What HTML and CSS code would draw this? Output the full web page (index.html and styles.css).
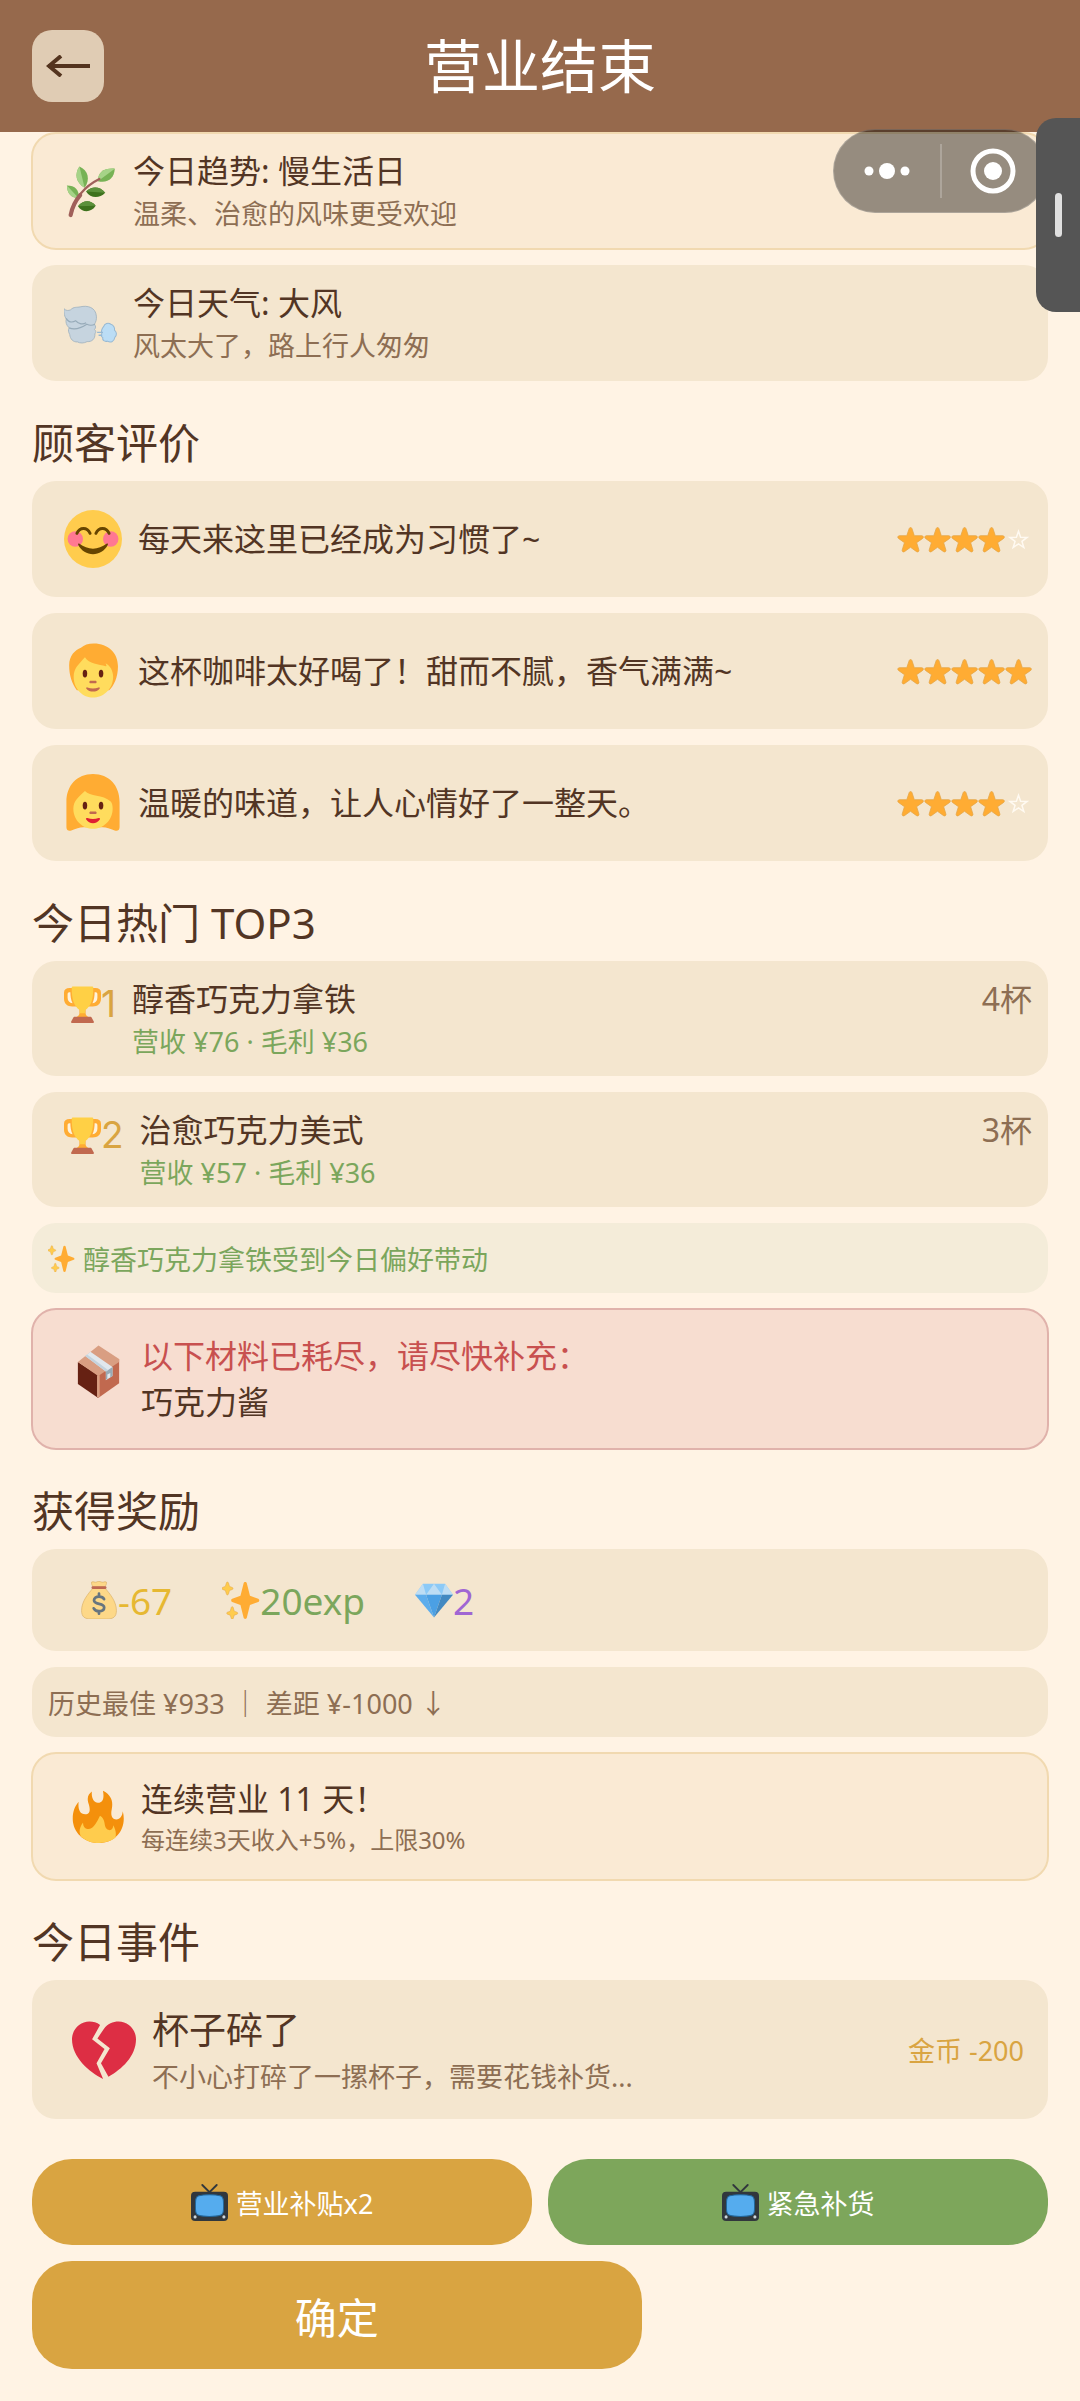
FILE: index.html
```html
<!DOCTYPE html>
<html lang="zh-CN">
<head>
  <meta charset="UTF-8">
  <meta name="viewport" content="width=device-width, initial-scale=1">
  <title>营业结束</title>
  <link rel="stylesheet" href="styles.css">
</head>
<body>

<!-- Shared icons -->
<svg class="sprite" aria-hidden="true">
  <symbol id="star" viewBox="0 0 36 36">
    <path fill="#ffac33" stroke="#e3a548" stroke-width="1" d="M27.3 34.6c-.4 0-.8-.1-1.2-.4L18 28.4l-8.1 5.8c-.7.5-1.6.5-2.3 0-.7-.5-1-1.4-.7-2.2l3-9.8-8-5.7c-.7-.5-1-1.4-.7-2.2.3-.8 1-1.4 1.9-1.4l9.9 0 3.2-9.4c.3-.8 1-1.4 1.9-1.4s1.6.6 1.9 1.4l3.1 9.4 10 0c.9 0 1.6.6 1.9 1.4.3.8 0 1.7-.7 2.2l-8.1 5.7 3 9.8c.3.8 0 1.7-.7 2.2-.3.3-.7.4-1.2.4z"/>
  </symbol>
  <symbol id="star-empty" viewBox="0 0 36 36">
    <path fill="none" stroke="#fffaf2" stroke-width="2" d="M18 7l2.800 8 8.700.2-6.900 5.300 2.500 8.200-7.100-4.900-7.100 4.900 2.500-8.200-6.900-5.300 8.700-.2z"/>
  </symbol>
  <symbol id="sparkles" viewBox="0 0 36 36">
    <path fill="#ffac33" d="M34.3 16.9l-7.8-3-3-11.800c-.2-.7-.8-1.100-1.500-1.100s-1.300.4-1.500 1.100l-3 11.800-7.800 3c-.6.2-1 .8-1 1.500s.4 1.200 1 1.400l7.800 3 3 12.100c.2.6.8 1.100 1.500 1.100s1.300-.5 1.500-1.100l3-12.100 7.800-3c.6-.2 1-.8 1-1.400s-.4-1.300-1-1.500z"/>
    <path fill="#ffcc4d" stroke="#e3a548" stroke-width=".5" d="M14.300 29.600l-2.700-1-1-3.500c-.1-.5-.5-.8-.9-.8s-.8.300-.9.700l-1 3.600-2.700 1c-.4.100-.6.500-.6.900s.2.800.6.900l2.700 1 1 3c.1.500.5.800.9.800s.8-.3.900-.7l1-3.100 2.700-1c.4-.1.600-.5.600-.9s-.2-.7-.6-.9zM9.800 6.200L7.100 5.100 6.100 1.700C5.900 1.200 5.500 1 5.100 1s-.8.200-.9.700l-1 3.400-2.700 1c-.3.200-.5.600-.5 1s.2.700.6.900l2.600 1 1 3.400c.1.500.5.800.9.800s.8-.3 1-.7l1-3.500 2.700-1c.4-.1.600-.5.600-.9s-.2-.8-.6-.9z"/>
  </symbol>
  <symbol id="trophy" viewBox="0 0 36 36">
    <path fill="#ffac33" d="M5.500 2C2 2 0 3.500 0 6.500v6C0 17.500 3.500 20 8 20h5.500V2zM30.500 2C34 2 36 3.500 36 6.500v6c0 5-3.500 7.500-8 7.500h-5.500V2z"/>
    <path fill="#fff3dc" d="M5.200 6c-1.200 0-1.700.7-1.700 2v3.500c0 3.200 2 5 4.800 5.200C6.800 14 6.200 9.500 6.200 6zM30.800 6c1.200 0 1.700.7 1.700 2v3.500c0 3.200-2 5-4.800 5.200 1.500-2.700 2.100-7.200 2.100-10.700z"/>
    <path fill="#ffac33" d="M15 21h6v5.500c0 2 1.500 3 4 4.500H11c2.500-1.500 4-2.500 4-4.500z"/>
    <path fill="#ffd045" d="M7.500 1.500c0-.8.6-1 1.200-1h18.600c.6 0 1.200.2 1.200 1C28.500 14 26 20 20.500 23.500v3h-5v-3C10 20 7.500 14 7.500 1.500z"/>
    <path fill="#c1694f" d="M10.500 30h15c.8 0 1.200.3 1.500 1l2 3.500c.3.7 0 1.500-1 1.500H8c-1 0-1.300-.8-1-1.500L9 31c.3-.7.7-1 1.500-1z"/>
  </symbol>
  <symbol id="tv" viewBox="0 0 36 36">
    <path fill="none" stroke="#31373d" stroke-width="1.800" stroke-linecap="round" d="M11 1l7 7 7-7"/>
    <rect x="0" y="7.500" width="36" height="28.500" rx="4" fill="#31373d"/>
    <path fill="#55acee" stroke="#226699" stroke-width="1" d="M7.500 11.500C12 10 24 10 28.500 11.500c3 1 3.200 3.500 3.200 9.500s-.2 8.500-3.200 9.500c-4.500 1.500-16.500 1.500-21 0-3-1-3.200-3.500-3.200-9.500s.2-8.500 3.200-9.500z"/>
    <circle cx="4" cy="32" r="1.500" fill="#ccd6dd"/>
    <circle cx="32" cy="32" r="1.500" fill="#ccd6dd"/>
  </symbol>
</svg>

<header class="topbar">
  <button class="back" aria-label="返回">
    <svg viewBox="0 0 44 22" aria-hidden="true"><path d="M2 11H44M15 1L3 11L15 21"/></svg>
  </button>
  <h1>营业结束</h1>
</header>

<div class="capsule">
  <button class="capsule-btn" aria-label="更多">
    <svg viewBox="0 0 46 18" width="46" height="18" aria-hidden="true"><circle cx="5" cy="9" r="4.500"/><circle cx="23" cy="9" r="8"/><circle cx="41" cy="9" r="4.500"/></svg>
  </button>
  <button class="capsule-btn" aria-label="关闭">
    <svg viewBox="0 0 46 46" width="46" height="46" aria-hidden="true"><circle class="ring" cx="23" cy="23" r="20"/><circle cx="23" cy="23" r="9"/></svg>
  </button>
</div>
<div class="side-tab"></div>

<main class="page">
  <div class="card highlight">
    <svg class="icon" viewBox="0 0 36 36" aria-hidden="true">
      <path fill="#77b255" d="M23 11C23 5 27 2 34.500 2.500 34 9 30 12.500 23 11z"/>
      <path fill="#a6d388" d="M23 11C23 5 27 2 34.500 2.500z"/>
      <path fill="#77b255" d="M14 15.500C8 12 7 6 10.500 1c6 2.500 7.500 9 3.500 14.500z"/>
      <path fill="#a6d388" d="M14 15.500C8 12 7 6 10.500 1z"/>
      <path fill="#77b255" d="M10 22.500C5 22.500 2 19.500 2 14c5.500 0 8.500 3 8 8.500z"/>
      <path fill="#a6d388" d="M10 22.500C5 22.500 2 19.500 2 14z"/>
      <path fill="#3e721d" d="M15 18c4-4 9.500-3.500 13 .8-4 4.200-10 4-13-.8z"/>
      <path fill="#5c913b" d="M15 18c4-4 9.500-3.500 13 .8z"/>
      <path fill="#3e721d" d="M9.500 28c3.500-4.500 9-4.500 12-.3-3 4.800-9 5-12 .3z"/>
      <path fill="#5c913b" d="M9.500 28c3.500-4.500 9-4.500 12-.3z"/>
      <path fill="none" stroke="#a0605a" stroke-width="1.600" stroke-linecap="round" d="M5 33C7 24 13 15 24 9.500"/>
      <path fill="none" stroke="#a0605a" stroke-width="2.800" stroke-linecap="round" d="M4.500 34C5.500 29 8 24 11 20.500"/>
    </svg>
    <div class="texts">
      <h3>今日趋势: 慢生活日</h3>
      <p>温柔、治愈的风味更受欢迎</p>
    </div>
  </div>

  <div class="card">
    <svg class="icon" viewBox="0 0 36 36" aria-hidden="true">
      <path fill="#c6d4df" stroke="#a3b4c0" stroke-width=".6" d="M0 8c1.500 1.500 3 1.300 4.500.7C6.500 6.500 9 7.200 11 6.700c5-1.200 10.500.3 11 6.300.2 2-.3 4-1.300 5.500 1 1.500 1 2.500 0 3.500 1 1 1.200 2 .3 3 .2 3.500-2 5.500-5.300 5.300-2 1.200-5 1.200-6.500.2-3 .3-5-2-5.300-5-.7-1.500-1.400-3-.4-4.500C1.500 19 1 17 1.500 15 .3 13-.3 10.500 0 8z"/>
      <path fill="none" stroke="#97abb9" stroke-width=".8" d="M1.500 14.500c1.500 2.500 4 3 6.500 1.700 2 2.300 5 2.600 7 1.300M3.500 21c4 1.500 9-.5 12-2.500 2 1 4 .8 5.500 0"/>
      <path fill="#bbddf5" stroke="#97b9d3" stroke-width=".7" d="M27 20c.5-2 3-3 4.800-1.500 2 .5 2.800 2.500 2.500 4 1.700 1.500 1.700 3.500.2 5-.5 3-3 3.800-5 2.500-2 .5-3.500-.5-3.200-2.500-1-.5-1.300-1.500-.6-2.500-.7-2 0-3.500 1.300-5z"/>
      <path fill="none" stroke="#97b9d3" stroke-width=".9" d="M22.500 24h4M23.500 26h2.500"/>
    </svg>
    <div class="texts">
      <h3>今日天气: 大风</h3>
      <p>风太大了，路上行人匆匆</p>
    </div>
  </div>

  <h2>顾客评价</h2>

  <div class="card review">
    <svg class="icon" viewBox="0 0 36 36" aria-hidden="true">
      <circle cx="18" cy="18" r="18" fill="#ffcc4d"/>
      <circle cx="7" cy="18" r="4.800" fill="#ff7892"/>
      <circle cx="29" cy="18" r="4.800" fill="#ff7892"/>
      <path fill="none" stroke="#664500" stroke-width="1.800" stroke-linecap="round" d="M8 14.500c1.800-4 6.400-4 8.200 0M19.800 14.500c1.800-4 6.400-4 8.200 0"/>
      <path fill="#664500" d="M8.800 21.600c-.3-.6.4-1 .8-.6 5 4 11.800 4 16.800 0 .5-.4 1.100 0 .8.6-3.700 7.800-14.700 7.800-18.400 0z"/>
    </svg>
    <p>每天来这里已经成为习惯了~</p>
    <div class="stars" role="img" aria-label="4星">
      <svg><use href="#star"/></svg><svg><use href="#star"/></svg><svg><use href="#star"/></svg><svg><use href="#star"/></svg><svg><use href="#star-empty"/></svg>
    </div>
  </div>

  <div class="card review">
    <svg class="icon" viewBox="0 0 36 36" aria-hidden="true">
      <path fill="#ffac33" d="M18.500 1c9 0 15 6 15 14 0 7-2.500 12-5.500 15H8C5 26 3.200 21 3.200 14.500 3.200 8 7 5 10.500 3.500 12.500 2 15 1 18.500 1z"/>
      <path fill="#ffdc5d" d="M13 9.500c2.500 4 8.500 4.500 13 5.500.7.2.2-1-.2-1.800 2.800 1.300 4.700 4.800 4.700 8.300 0 8-6.500 13-12.500 13S6 29.500 6 21.500c0-5 3-7.500 7-12z"/>
      <g fill="#662113"><ellipse cx="13" cy="19.600" rx="1.400" ry="2.400"/><ellipse cx="23" cy="19.600" rx="1.400" ry="2.400"/></g>
      <path fill="#c1694f" d="M16.500 24h3c1 0 1 1.600 0 1.600h-3c-1 0-1-1.600 0-1.600zM14.500 28.200c2.300.8 4.700.8 7 0 .6-.2.9.4.6.8-1.800 2.400-6.400 2.400-8.200 0-.3-.4 0-1 .6-.8z"/>
    </svg>
    <p>这杯咖啡太好喝了！甜而不腻，香气满满~</p>
    <div class="stars" role="img" aria-label="5星">
      <svg><use href="#star"/></svg><svg><use href="#star"/></svg><svg><use href="#star"/></svg><svg><use href="#star"/></svg><svg><use href="#star"/></svg>
    </div>
  </div>

  <div class="card review">
    <svg class="icon" viewBox="0 0 36 36" aria-hidden="true">
      <path fill="#ffac33" d="M18 0c10 0 16.500 7 16.500 17.500V33c0 2-1.500 2.500-3 2-3-1-5-2-7.500-2H12c-2.500 0-4.500 1-7.500 2-1.500.5-3 0-3-2V17.500C1.500 7 8 0 18 0z"/>
      <path fill="#ffdc5d" d="M13 10.500c3 3.500 11 2 16 6.500 1 1 1.200 3 1.200 4.500 0 7.500-6.200 12.500-12.200 12.500S5.800 29 5.800 21.500c0-5 3.500-7.500 7.200-11z"/>
      <g fill="#662113"><ellipse cx="13" cy="19.600" rx="1.400" ry="2.400"/><ellipse cx="23" cy="19.600" rx="1.400" ry="2.400"/></g>
      <path fill="#c1694f" d="M16.500 23.200h3c1 0 1 1.600 0 1.600h-3c-1 0-1-1.600 0-1.600z"/>
      <path fill="#df1f32" d="M14.500 27.300c2.300.8 4.700.8 7 0 .8-.2 1.100.4.7 1-1.800 3-6.600 3-8.400 0-.4-.6-.1-1.200.7-1z"/>
    </svg>
    <p>温暖的味道，让人心情好了一整天。</p>
    <div class="stars" role="img" aria-label="4星">
      <svg><use href="#star"/></svg><svg><use href="#star"/></svg><svg><use href="#star"/></svg><svg><use href="#star"/></svg><svg><use href="#star-empty"/></svg>
    </div>
  </div>

  <h2>今日热门 TOP3</h2>

  <div class="card top">
    <div class="rank"><svg><use href="#trophy"/></svg>1</div>
    <div class="texts">
      <h3>醇香巧克力拿铁</h3>
      <p>营收 ¥76 · 毛利 ¥36</p>
    </div>
    <span class="cups">4杯</span>
  </div>

  <div class="card top">
    <div class="rank"><svg><use href="#trophy"/></svg>2</div>
    <div class="texts">
      <h3>治愈巧克力美式</h3>
      <p>营收 ¥57 · 毛利 ¥36</p>
    </div>
    <span class="cups">3杯</span>
  </div>

  <div class="card strip boost"><svg><use href="#sparkles"/></svg>醇香巧克力拿铁受到今日偏好带动</div>

  <div class="card wide warning">
    <svg class="icon" viewBox="0 0 36 36" aria-hidden="true">
      <path fill="#662113" d="M4 11.500l13.800 9V36L4 26.500z"/>
      <path fill="#c1694f" d="M32 9.500l-14.200 11V36L32 26z"/>
      <path fill="#d99e82" d="M4 11.500L18 .3l14 9.200v2L17.800 21z"/>
      <path fill="#d99e82" d="M17 20.500h1.800V35l-1 .9-.8-.5z"/>
      <path fill="#e1e8ed" d="M9 7.500l3.500-3L27.500 15v6l-4.500 3v-6z"/>
      <path fill="#99aab5" d="M23 18l4.500-3v6L26 22v-3l-2 1v3l-1 .8z"/>
      <path fill="#c4d3dd" d="M9 7.500l1.300-1L24.500 17 23 18z"/>
    </svg>
    <div class="texts">
      <h3>以下材料已耗尽，请尽快补充：</h3>
      <p>巧克力酱</p>
    </div>
  </div>

  <h2>获得奖励</h2>

  <div class="card rewards">
    <div class="reward coin">
      <svg viewBox="0 0 36 36" aria-hidden="true">
        <path fill="#fdd888" stroke="#d9ae64" stroke-width=".6" d="M12 7h12c4 5 10.500 12 10.500 21 0 6-3 8-9 8h-15c-6 0-9-2-9-8C1.500 19 8 12 12 7zM11 1c2-1 3 .8 4.500 0s3-.8 5 0S23 0 25 1c.5 1.500-.5 3.500-1.500 4.500h-11C11.500 4.500 10.500 2.500 11 1z"/>
        <path fill="#bf6952" d="M12 5h12c1.500 0 1.500 2.500 0 2.500H12C10.500 7.500 10.500 5 12 5z"/>
        <path fill="none" stroke="#67757f" stroke-width="2.600" stroke-linecap="round" d="M22.800 17.200c-1-2-2.800-2.400-4.800-2.400-2.800 0-4.700 1.200-4.700 3.400 0 4.800 9.600 2.200 9.600 6.900 0 2.200-2 3.500-4.900 3.500-2.200 0-4-.7-5-2.700M18 12v2M18 29v2"/>
      </svg>-67
    </div>
    <div class="reward exp"><svg><use href="#sparkles"/></svg>20exp</div>
    <div class="reward gem">
      <svg viewBox="0 0 36 36" aria-hidden="true">
        <path fill="#8ccaf7" d="M7.500 2.500h21L36 13H0z"/>
        <path fill="#bdddf4" d="M7.500 2.500L10.500 13H0zM18 2.500L10.500 13h15zM28.500 2.500L25.500 13H36z"/>
        <path fill="#5dadec" d="M0 13h10.500L18 34.500z"/>
        <path fill="#4ba0e4" d="M10.500 13h15L18 34.500z"/>
        <path fill="#4289c1" d="M25.500 13H36L18 34.500z"/>
      </svg>2
    </div>
  </div>

  <div class="card strip">历史最佳 ¥933 ｜ 差距 ¥-1000 ↓</div>

  <div class="card wide highlight streak">
    <svg class="icon" viewBox="0 0 36 36" aria-hidden="true">
      <path fill="#f4900c" d="M18 36C8 36 .5 28.500.5 19.500c0-5 1.500-8.500 4-11.500-.5 4.500.5 8.500 4.500 8.500 4 0 3.300-4.500 2-8C10 4.500 11.500 2.500 13.500 1c-.5 4.500 1.500 7.500 4 7.700 3 .3 4.700-2.700 3.500-8.200C27 3.500 28 8 27 13c-1 4.500.5 7 3 7 2.800 0 4.200-2.500 4.500-5.500C37.500 26 30 36 18 36z"/>
      <path fill="#ffcc4d" d="M6 31.500C4.500 28.500 5 25.500 7.500 22c0 3 1.500 4.500 4 4.500 3.500-.5 5.500-5 7.500-9 4 2 2.500 7 4.500 8.800 2.300 2 4.500.7 4.500-2.300 2 3.500 2 6 1.500 8.500C23 37.500 12 37 6 31.500z"/>
    </svg>
    <div class="texts">
      <h3>连续营业 11 天！</h3>
      <p>每连续3天收入+5%，上限30%</p>
    </div>
  </div>

  <h2>今日事件</h2>

  <div class="card wide event">
    <svg class="icon" viewBox="0 0 36 36" aria-hidden="true">
      <path fill="#dd2e44" d="M15.800 4c-1.800-1.500-3.800-2-6-2C4.500 2 0 6.500 0 12c0 10 9.500 18.500 17.500 22.300L13.800 25.500l4.500-8-7-5.500zM18 6c2-2.700 5-4 8.200-4C31.500 2 36 6.500 36 12c0 9.500-8 17-15.500 21L16.300 25.500l5-8.500-7-5.500z"/>
    </svg>
    <div class="texts">
      <h3>杯子碎了</h3>
      <p>不小心打碎了一摞杯子，需要花钱补货...</p>
    </div>
    <span class="cost">金币 -200</span>
  </div>

  <div class="actions">
    <button class="btn"><svg><use href="#tv"/></svg>营业补贴x2</button>
    <button class="btn green"><svg><use href="#tv"/></svg>紧急补货</button>
    <button class="btn confirm">确定</button>
  </div>
</main>

</body>
</html>
```

FILE: styles.css
```css
* {
  box-sizing: border-box;
}

body {
  margin: 0;
  background: #fff3e4;
  color: #523524;
  font-family: 'Noto Sans', 'Noto Sans CJK SC', sans-serif;
  font-size: 32px;
}

h1, h2, h3, p {
  margin: 0;
  font-weight: normal;
}

button {
  border: none;
  padding: 0;
  font-family: inherit;
  cursor: pointer;
}

.sprite {
  display: none;
}

/* Header */
.topbar {
  display: grid;
  grid-template-columns: 72px 1fr 72px;
  align-items: center;
  height: 132px;
  padding: 0 32px;
  background: #96694c;
}

.topbar h1 {
  color: #fff;
  font-size: 58px;
  line-height: 72px;
  text-align: center;
}

.back {
  display: flex;
  align-items: center;
  justify-content: center;
  height: 72px;
  background: #e0ccb4;
  border-radius: 20px;
}

.back svg {
  width: 44px;
  height: 22px;
  fill: none;
  stroke: #54341f;
  stroke-width: 4;
}

/* Host app controls floating over the page */
.capsule {
  position: absolute;
  top: 129px;
  right: 33px;
  display: flex;
  width: 214px;
  height: 84px;
  background: rgba(0, 0, 0, 0.4);
  border: 1px solid rgba(255, 255, 255, 0.2);
  border-radius: 42px;
}

.capsule-btn {
  flex: 1;
  display: flex;
  align-items: center;
  justify-content: center;
  background: none;
}

.capsule-btn + .capsule-btn::before {
  content: "";
  position: absolute;
  left: 50%;
  width: 2px;
  height: 54px;
  background: rgba(255, 255, 255, 0.22);
}

.capsule svg {
  fill: #fff;
}

.capsule .ring {
  fill: none;
  stroke: #fff;
  stroke-width: 5;
}

.side-tab {
  position: absolute;
  top: 118px;
  right: 0;
  display: flex;
  align-items: center;
  justify-content: center;
  width: 44px;
  height: 194px;
  background: #555;
  border-radius: 20px 0 0 20px;
}

.side-tab::after {
  content: "";
  width: 7px;
  height: 44px;
  background: #e0e0e0;
  border-radius: 4px;
}

/* Content */
.page {
  padding: 1px 32px 32px;
}

h2 {
  margin: 40px 0 16px;
  font-size: 42px;
  line-height: 44px;
}

.card {
  display: flex;
  align-items: center;
  gap: 16px;
  min-height: 116px;
  padding: 0 16px 0 32px;
  background: #f4e6cf;
  border-radius: 24px;
}

.card + .card {
  margin-top: 16px;
}

.card h3 {
  font-size: 32px;
  line-height: 46px;
}

.texts {
  flex: 1;
}

.texts p {
  color: #8d6e53;
  font-size: 27px;
  line-height: 40px;
}

.icon {
  flex: none;
  width: 53px;
  height: 53px;
}

.highlight {
  background: #faead4;
  outline: 2px solid #f1d9b0;
  outline-offset: -1px;
}

/* Reviews */
.review .icon {
  width: 58px;
  height: 58px;
}

.review p {
  flex: 1;
  line-height: 46px;
}

.stars {
  display: flex;
}

.stars svg {
  width: 27px;
  height: 27px;
}

/* Top drinks */
.top {
  align-items: flex-start;
  min-height: 115px;
  padding-top: 15px;
}

.top .texts p {
  color: #7ba65c;
}

.rank {
  display: flex;
  align-items: center;
  color: #d9a441;
  font-family: Inter, sans-serif;
  font-size: 37px;
  line-height: 56px;
}

.rank svg {
  width: 37px;
  height: 37px;
}

.cups {
  color: #8d6e53;
  line-height: 46px;
}

/* One line notes */
.strip {
  min-height: 70px;
  padding: 0 16px;
  gap: 8px;
  color: #8d6e53;
  font-size: 27px;
}

.boost {
  background: #f4ecd9;
  color: #7ba65c;
}

.boost svg {
  width: 27px;
  height: 27px;
}

/* Cards with a wider inset */
.wide {
  padding: 0 24px 0 40px;
}

.warning {
  align-items: flex-start;
  min-height: 140px;
  padding-top: 24px;
  background: #f7ddd0;
  outline: 2px solid #e0b2ab;
  outline-offset: -1px;
}

.warning .icon {
  margin-top: 12px;
}

.warning h3 {
  color: #c8504f;
}

.warning .texts p {
  color: #523524;
  font-size: 32px;
  line-height: 46px;
}

.rewards {
  min-height: 102px;
  padding: 0 48px;
  gap: 50px;
}

.reward {
  display: flex;
  align-items: center;
  font-size: 37px;
}

.reward svg {
  width: 38px;
  height: 38px;
}

.coin { color: #e6b832; }
.exp { color: #7ba65c; }
.gem { color: #a066d3; }

.streak {
  min-height: 127px;
}

.streak .texts p {
  font-size: 24px;
  line-height: 36px;
}

.event {
  min-height: 139px;
}

.event .icon {
  width: 64px;
  height: 64px;
}

.event h3 {
  font-size: 37px;
  line-height: 54px;
}

.cost {
  color: #d9a441;
  font-size: 27px;
}

/* Buttons */
.actions {
  display: grid;
  grid-template-columns: 1fr 1fr;
  gap: 16px;
  margin-top: 40px;
}

.btn {
  display: flex;
  align-items: center;
  justify-content: center;
  gap: 8px;
  height: 86px;
  background: #d9a441;
  border-radius: 40px;
  color: #fff;
  font-size: 27px;
}

.btn svg {
  width: 37px;
  height: 37px;
}

.btn.green {
  background: #7da65b;
}

.btn.confirm {
  grid-column: 1 / -1;
  width: 60%;
  height: 108px;
  font-size: 42px;
}
```
